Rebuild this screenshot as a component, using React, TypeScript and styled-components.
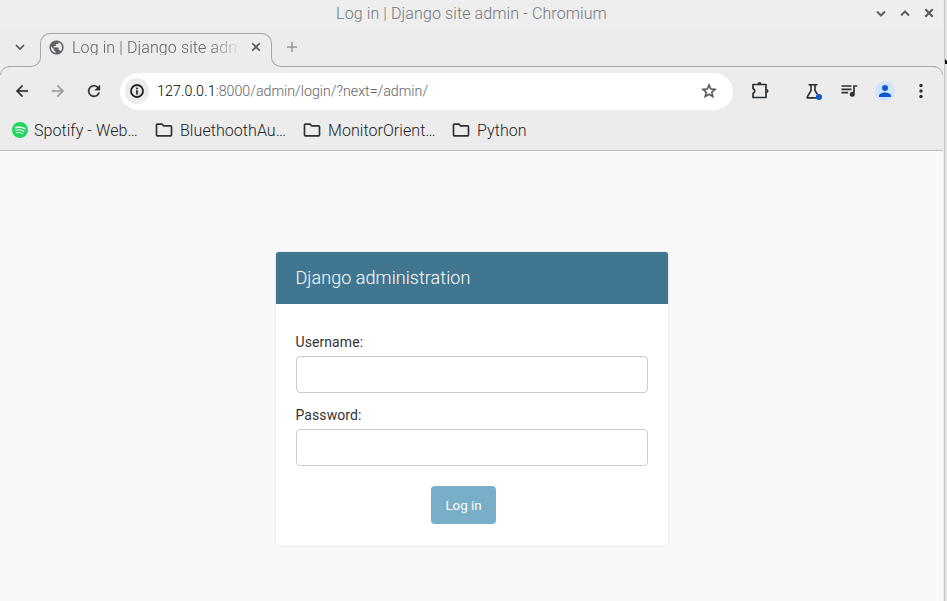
import React from "react";
import styled, { createGlobalStyle } from "styled-components";

const GlobalStyle = createGlobalStyle`
  * { box-sizing: border-box; }
  html, body { margin: 0; overflow: hidden; }
  body { font-family: Roboto, "Liberation Sans", sans-serif; }
`;

const Desktop = styled.div`
  display: flex;
  width: 947px;
  height: 601px;
  overflow: hidden;
  background: #ececec;
`;

const BrowserWindow = styled.div`
  display: flex;
  flex-direction: column;
  width: 943px;
  background: #ececec;
`;

const WindowEdge = styled.div`
  width: 4px;
  border-left: 1px solid #ececec;
  background: linear-gradient(90deg, #c4c4c4 1px, #e4e4e4 1px);
  padding: 59px 0 0 1px;
`;

const PointerTip = styled.svg`
  display: block;
`;

const TitleBar = styled.header`
  display: flex;
  justify-content: center;
  align-items: center;
  position: relative;
  height: 27px;
  background: #eeeeee;
  color: #74777b;
  font-size: 16px;
  font-weight: 300;
  letter-spacing: 0.11px;
  line-height: 26px;
`;

const WindowControls = styled.div`
  position: absolute;
  right: 8px;
  top: 7px;
  display: flex;
  gap: 12px;
`;

const TabStrip = styled.div`
  display: flex;
  height: 39px;
  padding-top: 6px;
`;

const TabSearch = styled.div`
  width: 40px;
  padding: 8px 0 0 14px;
  line-height: 0;
`;

const Tab = styled.div`
  position: relative;
  display: flex;
  width: 232px;
  height: 24px;
  padding: 5px 0 0 7px;
  border: 1px solid #a6a6a6;
  border-bottom: 0;
  border-radius: 10px 10px 0 0;
  &::before, &::after {
    content: "";
    position: absolute;
    top: 21px;
    height: 12px;
    border-bottom: 1px solid #a6a6a6;
  }
  &::before {
    right: 229px;
    width: 32px;
    border-right: 1px solid #a6a6a6;
    border-bottom-right-radius: 10px;
    transform: translate(0, -1px);
  }
  &::before { right: 230px; }
  &::after {
    left: 230px;
    width: 664px;
    border-left: 1px solid #a6a6a6;
    border-bottom-left-radius: 10px;
    transform: translate(0, -1px);
  }
`;

const TabTitle = styled.div`
  width: 166px;
  height: 16px;
  margin-left: 7px;
  overflow: hidden;
  white-space: nowrap;
  font-size: 16px;
  font-weight: 300;
  letter-spacing: 0.11px;
  line-height: 17px;
  color: #5f6368;
  -webkit-mask-image: linear-gradient(90deg, #000 138px, transparent 169px);
  mask-image: linear-gradient(90deg, #000 138px, transparent 169px);
`;

const CloseSlot = styled.div`
  padding: 2px 0 0 12px;
  line-height: 0;
`;

const NewTab = styled.div`
  padding: 8px 0 0 14px;
  line-height: 0;
`;

const Toolbar = styled.div`
  position: relative;
  display: flex;
  align-items: center;
  height: 49px;
  padding: 1px 0 0;
  &::before, &::after {
    content: "";
    position: absolute;
    top: 0;
    width: 10px;
    height: 8px;
    border-top: 1px solid #a6a6a6;
  }
  &::before {
    left: 0;
    border-left: 1px solid #b4b4b4;
    border-top-left-radius: 10px 9px;
  }
  &::after {
    right: 0;
    border-right: 1px solid #b4b4b4;
    border-top-right-radius: 10px 9px;
  }
`;

const NavButtons = styled.div`
  display: flex;
  width: 120px;
  padding-left: 13px;
  gap: 18px;
  svg { flex: none; }
`;

const AddressBar = styled.div`
  display: flex;
  align-items: center;
  width: 613px;
  height: 37px;
  padding: 0 15px 0 5px;
  border-radius: 19px;
  background: #fff;
`;

const SiteInfo = styled.div`
  display: grid;
  place-items: center;
  width: 24px;
  height: 26px;
  border-radius: 13px;
  background: #ececec;
`;

const Url = styled.div`
  flex: 1;
  margin-left: 8px;
  font-size: 14.24px;
  font-weight: 300;
  line-height: 20px;
  color: #5f6368;
`;

const Host = styled.span`
  color: #000;
  letter-spacing: 0.12px;
`;

const Actions = styled.div`
  display: flex;
  align-items: center;
  padding-left: 17px;
`;

const ActionSlot = styled.div<{ $gap: number }>`
  display: flex;
  margin-left: ${(p) => p.$gap}px;
`;

const Avatar = styled.div`
  display: grid;
  place-items: center;
  width: 20px;
  height: 20px;
  margin-left: 16px;
  border-radius: 50%;
  background: #d3e3fd;
`;

const BookmarkBar = styled.nav`
  display: flex;
  height: 36px;
  padding-left: 10px;
  border-bottom: 1px solid #bdbdbd;
`;

const Bookmark = styled.div<{ $width: number; $gap: number }>`
  display: flex;
  gap: ${(p) => p.$gap}px;
  width: ${(p) => p.$width}px;
  white-space: nowrap;
  font-size: 16px;
  font-weight: 300;
  letter-spacing: 0.06px;
  line-height: 32px;
  color: #202327;
  svg { margin-top: 5px; flex: none; }
`;

const Page = styled.main`
  flex: 1;
  padding: 100px 0 0 275px;
  background: #f8f8f8;
`;

const LoginCard = styled.section`
  width: 394px;
  height: 296px;
  border: 1px solid #eaeaea;
  border-radius: 4px;
  overflow: hidden;
  background: #fff;
`;

const CardHeader = styled.h1`
  height: 52px;
  margin: 0;
  padding-left: 19.5px;
  background: #417690;
  color: #fff;
  font-size: 18px;
  font-weight: 300;
  letter-spacing: 0.06px;
  line-height: 52px;
`;

const LoginForm = styled.form`
  display: flex;
  flex-direction: column;
  padding: 29px 20px 0;
`;

const Label = styled.label`
  height: 23px;
  margin-left: -0.5px;
  color: #333;
  font-size: 14px;
  letter-spacing: 0.08px;
  line-height: 18px;
`;

const Input = styled.input`
  width: 352px;
  height: 37px;
  margin: 0 0 13px;
  padding: 8px;
  border: 1px solid #ccc;
  border-radius: 4px;
  background: #fff;
  font: 14px Roboto, sans-serif;
  outline: none;
`;

const SubmitButton = styled.button`
  width: 65px;
  height: 38px;
  margin: 7px 0 0 135px;
  padding: 1px 0 0;
  border: 0;
  border-radius: 4px;
  background: #79aec8;
  color: #fff;
  font: 13.333px Roboto, sans-serif;
  line-height: 38px;
`;

type IconProps = { d: string; size?: number; color?: string; bold?: number };

const Icon = ({ d, size = 18, color = "#2e3134", bold = 0 }: IconProps) => (
  <svg width={size} height={size} viewBox="0 0 24 24" fill={color} stroke={color} strokeWidth={bold}>
    <path d={d} />
  </svg>
);

const paths = {
  back: "M20 11H7.83l5.59-5.59L12 4l-8 8 8 8 1.41-1.41L7.83 13H20z",
  forward: "M12 4l-1.41 1.41L16.17 11H4v2h12.17l-5.58 5.59L12 20l8-8z",
  reload:
    "M17.65 6.35A7.96 7.96 0 0 0 12 4a8 8 0 1 0 7.73 10h-2.08A6 6 0 1 1 12 6c1.66 0 3.14.69 4.22 1.78L13 11h7V4z",
  globe:
    "M12 2a10 10 0 1 0 0 20 10 10 0 0 0 0-20zm-1 17.93A8 8 0 0 1 4.21 10.21L9 15v1a2 2 0 0 0 2 2zm6.9-2.54A2 2 0 0 0 16 16h-1v-3a1 1 0 0 0-1-1H8v-2h2a1 1 0 0 0 1-1V7h2a2 2 0 0 0 2-2v-.41a8 8 0 0 1 2.9 12.8z",
  info: "M11 7h2v2h-2zm0 4h2v6h-2zm1-9a10 10 0 1 0 0 20 10 10 0 0 0 0-20zm0 18a8 8 0 1 1 0-16 8 8 0 0 1 0 16z",
  star: "M22 9.24l-7.19-.62L12 2 9.19 8.63 2 9.24l5.46 4.73L5.82 21 12 17.27 18.18 21l-1.63-7.03zM12 15.4l-3.76 2.27 1-4.28-3.32-2.88 4.38-.38L12 6.1l1.71 4.04 4.38.38-3.32 2.88 1 4.28z",
  queue: "M15 5H3v2h12zm0 4H3v2h12zM3 15h8v-2H3zM17 5v8.18A3 3 0 1 0 19 16V7h3V5z",
  folder:
    "M9.17 6l2 2H20v10H4V6zM10 4H4a2 2 0 0 0-2 2v12a2 2 0 0 0 2 2h16a2 2 0 0 0 2-2V8a2 2 0 0 0-2-2h-8z",
  person: "M12 12a4 4 0 1 0 0-8 4 4 0 0 0 0 8zm0 2c-2.67 0-8 1.34-8 4v2h16v-2c0-2.66-5.33-4-8-4z",
};

const Stroke = ({ d, color = "#606060", width = 2 }: { d: string; color?: string; width?: number }) => (
  <svg width="12" height="12" viewBox="0 0 12 12" fill="none" stroke={color} strokeWidth={width}>
    <path d={d} />
  </svg>
);

const SpotifyIcon = () => (
  <svg width="20" height="20" viewBox="0 0 20 20" fill="none" stroke="#ececec" strokeLinecap="round">
    <circle cx="10" cy="10" r="8" fill="#1ed760" stroke="none" />
    <path d="M5.5 7.7c3-.9 6.5-.6 9.2.9" strokeWidth="1.6" />
    <path d="M5.9 10.3c2.7-.7 5.5-.4 7.9.9" strokeWidth="1.3" />
    <path d="M6.2 12.7c2.4-.5 4.6-.3 6.6.9" strokeWidth="1.1" />
  </svg>
);

const ExtensionIcon = () => (
  <svg width="20" height="20" viewBox="0 0 20 20" fill="none" stroke="#2e3134" strokeWidth="1.7">
    <path d="M3 3.5h13v13H3v-4.2c2.3-.4 2.3-4.2 0-4.6z" strokeLinejoin="round" />
    <path d="M7.5 3a2 2 0 0 1 4 0zM16.5 8a2 2 0 0 1 0 4z" fill="#2e3134" stroke="none" />
  </svg>
);

const LabsIcon = () => (
  <svg width="20" height="20" viewBox="0 0 20 20" fill="none" stroke="#2e3134" strokeWidth="1.6">
    <path d="M4.5 3.8h9M7 4v5.500L3.200 16q-.3.900.7.900h9M11 4v5.500l2.500 4" />
    <circle cx="15" cy="16" r="3" fill="#0b57d0" stroke="none" />
  </svg>
);

const MenuIcon = () => (
  <svg width="16" height="20" viewBox="0 0 16 20" fill="#2e3134">
    <circle cx="8" cy="4.5" r="1.7" />
    <circle cx="8" cy="10" r="1.7" />
    <circle cx="8" cy="15.5" r="1.7" />
  </svg>
);

const folders = [
  { name: "BluethoothAu…", width: 148 },
  { name: "MonitorOrient…", width: 149 },
  { name: "Python", width: 90 },
];

export default function App() {
  return (
    <Desktop>
      <GlobalStyle />
      <BrowserWindow>
        <TitleBar>
          Log in | Django site admin - Chromium
          <WindowControls>
            <Stroke d="M2 4.5l4 4 4-4" />
            <Stroke d="M2 8.5l4-4 4 4" />
            <Stroke d="M2.3 2.3l7.4 7.4M9.7 2.3l-7.4 7.4" width={2.3} />
          </WindowControls>
        </TitleBar>
        <TabStrip>
          <TabSearch>
            <Stroke d="M2 4l4 4 4-4" color="#515356" width={1.7} />
          </TabSearch>
          <Tab>
            <Icon d={paths.globe} size={17} color="#5f6368" bold={0.3} />
            <TabTitle>Log in | Django site admin</TabTitle>
            <CloseSlot>
              <Stroke d="M2.2 2.2l7.6 7.6M9.8 2.2l-7.6 7.6" color="#515356" width={1.6} />
            </CloseSlot>
          </Tab>
          <NewTab>
            <Stroke d="M6 1v10M1 6h10" color="#989898" width={1.5} />
          </NewTab>
        </TabStrip>
        <Toolbar>
          <NavButtons>
            <Icon d={paths.back} bold={0.4} />
            <Icon d={paths.forward} color="#9b9b9b" bold={0.4} />
            <Icon d={paths.reload} bold={0.4} />
          </NavButtons>
          <AddressBar>
            <SiteInfo>
              <Icon d={paths.info} size={16} color="#111" bold={0.6} />
            </SiteInfo>
            <Url>
              <Host>127.0.0.1</Host>:8000/admin/login/?next=/admin/
            </Url>
            <Icon d={paths.star} size={18} color="#4b4d50" bold={0.5} />
          </AddressBar>
          <Actions>
            <ActionSlot $gap={0}><ExtensionIcon /></ActionSlot>
            <ActionSlot $gap={34}><LabsIcon /></ActionSlot>
            <ActionSlot $gap={15}><Icon d={paths.queue} size={20} /></ActionSlot>
            <Avatar><Icon d={paths.person} color="#0b57d0" /></Avatar>
            <ActionSlot $gap={18}><MenuIcon /></ActionSlot>
          </Actions>
        </Toolbar>
        <BookmarkBar>
          <Bookmark $width={144} $gap={4}>
            <SpotifyIcon />
            Spotify - Web…
          </Bookmark>
          {folders.map((folder) => (
            <Bookmark key={folder.name} $width={folder.width} $gap={6}>
              <Icon d={paths.folder} size={20} />
              {folder.name}
            </Bookmark>
          ))}
        </BookmarkBar>
        <Page>
          <LoginCard>
            <CardHeader>Django administration</CardHeader>
            <LoginForm>
              <Label htmlFor="username">Username:</Label>
              <Input id="username" type="text" />
              <Label htmlFor="password">Password:</Label>
              <Input id="password" type="password" />
              <SubmitButton type="button">Log in</SubmitButton>
            </LoginForm>
          </LoginCard>
        </Page>
      </BrowserWindow>
      <WindowEdge>
        <PointerTip width="2" height="5" viewBox="0 0 2 5">
          <path d="M0 0l2 2v3H0z" fill="#000" />
        </PointerTip>
      </WindowEdge>
    </Desktop>
  );
}
